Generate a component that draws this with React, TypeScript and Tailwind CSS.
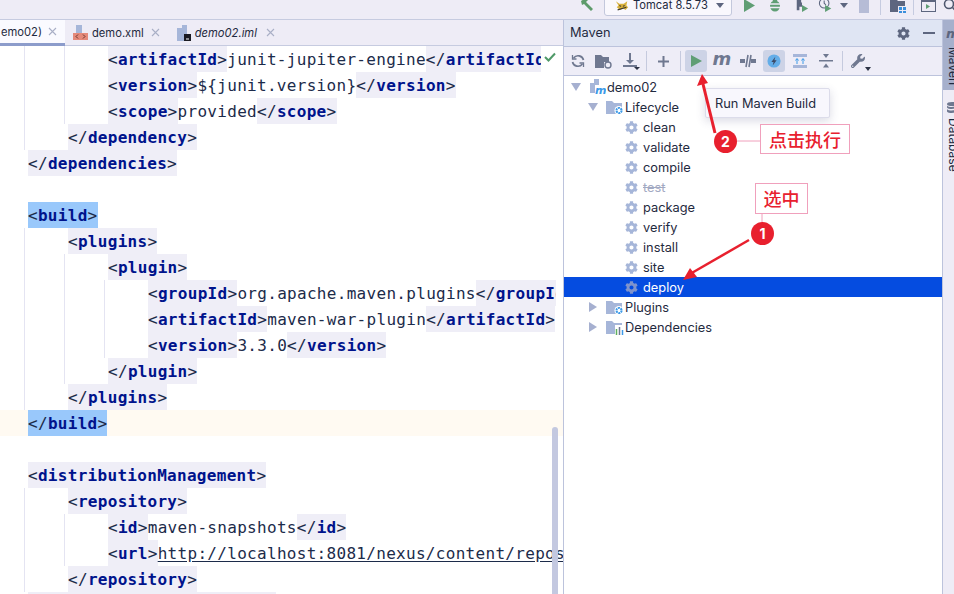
import { FaCog, FaWrench } from "react-icons/fa";
import type { ReactNode } from "react";

type Seg = { t: string; k?: "tag" | "text" | "url" };
type Line = { indent: number; segs: Seg[]; sel?: boolean; caret?: boolean; clip?: boolean };

const tag = (name: string, close = false) => ({ t: close ? `</${name}>` : `<${name}>`, k: "tag" as const });
const txt = (t: string) => ({ t, k: "text" as const });

const lines: Line[] = [
  { indent: 2, segs: [tag("artifactId"), txt("junit-jupiter-engine"), { t: "</artifactId>", k: "tag" }] },
  { indent: 2, segs: [tag("version"), txt("${junit.version}"), tag("version", true)] },
  { indent: 2, segs: [tag("scope"), txt("provided"), tag("scope", true)] },
  { indent: 1, segs: [tag("dependency", true)] },
  { indent: 0, segs: [tag("dependencies", true)] },
  { indent: 0, segs: [] },
  { indent: 0, segs: [tag("build")], sel: true },
  { indent: 1, segs: [tag("plugins")] },
  { indent: 2, segs: [tag("plugin")] },
  { indent: 3, segs: [tag("groupId"), txt("org.apache.maven.plugins"), tag("groupId", true)], clip: true },
  { indent: 3, segs: [tag("artifactId"), txt("maven-war-plugin"), tag("artifactId", true)] },
  { indent: 3, segs: [tag("version"), txt("3.3.0"), tag("version", true)] },
  { indent: 2, segs: [tag("plugin", true)] },
  { indent: 1, segs: [tag("plugins", true)] },
  { indent: 0, segs: [tag("build", true)], sel: true, caret: true },
  { indent: 0, segs: [] },
  { indent: 0, segs: [tag("distributionManagement")] },
  { indent: 1, segs: [tag("repository")] },
  { indent: 2, segs: [tag("id"), txt("maven-snapshots"), tag("id", true)] },
  { indent: 2, segs: [tag("url"), { t: "http://localhost:8081/nexus/content/repository/maven", k: "url" }] },
  { indent: 1, segs: [tag("repository", true)] },
  { indent: 0, segs: [tag("distributionManagement", true)] },
];

const goals = ["clean", "validate", "compile", "test", "package", "verify", "install", "site", "deploy"];

function TagText({ text }: { text: string }) {
  const m = text.match(/^(<\/?)(.*)(>)$/);
  if (!m) return <>{text}</>;
  return (
    <>
      <span className="font-normal text-[#1c2b4a]">{m[1]}</span>
      <span className="font-bold text-[#00138c]">{m[2]}</span>
      <span className="font-normal text-[#1c2b4a]">{m[3]}</span>
    </>
  );
}

function CodeLine({ line }: { line: Line }) {
  return (
    <div
      className={`flex h-[26px] shrink-0 leading-[28px] whitespace-pre ${line.caret ? "bg-[#fffaf2]" : ""} ${
        line.clip ? "w-[556px] overflow-hidden" : ""
      }`}
    >
      <div className="flex pl-[24px]">
        {Array.from({ length: line.indent }).map((_, i) => (
          <span key={i} className="w-[40px] border-l border-[#e4e4f2]" />
        ))}
      </div>
      <div className="flex pl-[4px]">
        {line.segs.map((s, i) => {
          if (s.k === "tag")
            return (
              <span key={i} className={line.sel ? "bg-[#99c8fb]" : "bg-[#efeef7]"}>
                <TagText text={s.t} />
              </span>
            );
          if (s.k === "url")
            return (
              <span key={i} className="text-[#1c2b4a] underline underline-offset-2">
                {s.t}
              </span>
            );
          return (
            <span key={i} className="text-[#1c2b4a]">
              {s.t}
            </span>
          );
        })}
      </div>
    </div>
  );
}

function Sep({ className = "" }: { className?: string }) {
  return <span className={`h-[20px] w-px bg-[#c5cade] ${className}`} />;
}

function ToolIcon({ children, on = false, w = 22 }: { children: ReactNode; on?: boolean; w?: number }) {
  return (
    <span
      className={`flex h-[22px] items-center justify-center rounded-[3px] ${on ? "bg-[#cdd3e6]" : ""}`}
      style={{ width: w }}
    >
      {children}
    </span>
  );
}

function FolderIcon({ badge }: { badge?: ReactNode }) {
  return (
    <svg width="18" height="16" viewBox="0 0 18 16">
      <path d="M0 2h6l2 2h8v11H0z" fill="#a6b6d9" />
      {badge}
    </svg>
  );
}

function GearBadge() {
  return (
    <g>
      <circle cx="13" cy="11.500" r="4.500" fill="#fff" />
      <circle cx="13" cy="11.500" r="2.600" fill="none" stroke="#3c9ae8" strokeWidth="2" strokeDasharray="2 0.700" />
    </g>
  );
}

function TabClose({ className = "" }: { className?: string }) {
  return (
    <svg width="9" height="9" viewBox="0 0 9 9" className={className}>
      <path d="M1 1l7 7M8 1l-7 7" stroke="#a9afc6" strokeWidth="1.100" />
    </svg>
  );
}

function TopBar() {
  return (
    <div className="flex h-[20px] shrink-0 items-start overflow-hidden border-b border-[#c6cbe0] bg-[#eeecf6] pl-[579px]">
      <div className="-mt-[6px] flex h-[22px] items-center whitespace-nowrap">
        <svg width="16" height="16" viewBox="0 0 16 16">
          <path d="M2 4l5-3 2 2-2 2 7 7-2 2-7-7-2 1z" fill="#5d9b6a" />
        </svg>
        <div className="ml-[9px] flex h-[21px] w-[128px] shrink-0 items-center rounded-[3px] border border-[#c3c8dc] bg-[#f9f8fd] pl-[10px] text-[11.200px] text-[#1f2a40]">
          <svg width="14" height="13" viewBox="0 0 16 14" className="mr-[4px] shrink-0">
            <path d="M1 2l4 3h5l4-3-1 5 2 2-3 3-3-2-3 2-4-3 2-2z" fill="#d8b13c" />
            <path d="M5 7l2 1M11 7l-2 1M3 12l10-3" stroke="#3c3a32" strokeWidth="1.200" />
          </svg>
          <span className="pt-px">Tomcat 8.5.73</span>
          <svg width="8" height="5" viewBox="0 0 10 6" className="ml-[8px] shrink-0">
            <path d="M0 0h10L5 6z" fill="#5d667f" />
          </svg>
        </div>
        <svg width="11" height="13" viewBox="0 0 11 13" className="ml-[12px] shrink-0">
          <path d="M0 0l11 6.500L0 13z" fill="#5f9e74" />
        </svg>
        <svg width="12" height="14" viewBox="0 0 12 14" className="ml-[14px] shrink-0">
          <ellipse cx="6" cy="8" rx="5" ry="5.500" fill="#5f9e74" />
          <path d="M1 6h10M1 9.500h10" stroke="#eeecf6" strokeWidth="1.300" />
          <circle cx="6" cy="2.500" r="2.200" fill="#5f9e74" />
        </svg>
        <svg width="14" height="16" viewBox="0 0 16 16" className="ml-[14px] shrink-0">
          <path d="M2 1h5v4h1v5H5v4H2z" fill="#5d667f" />
          <path d="M8 8l7 4-7 4z" fill="#5f9e74" />
        </svg>
        <svg width="15" height="16" viewBox="0 0 17 16" className="ml-[9px] shrink-0">
          <circle cx="7" cy="6" r="5.400" fill="none" stroke="#5d667f" strokeWidth="1.200" />
          <path d="M7 3v3l2 2" stroke="#5d667f" strokeWidth="1.200" fill="none" />
          <path d="M8 8l7 4-7 4z" fill="#5f9e74" />
        </svg>
        <svg width="8" height="5" viewBox="0 0 8 5" className="ml-[7px] shrink-0">
          <path d="M0 0h8L4 5z" fill="#5d667f" />
        </svg>
        <span className="ml-[11px] h-[15px] w-[10px] shrink-0 bg-[#b6bcd6]" />
        <span className="ml-[11px] h-[20px] w-px shrink-0 bg-[#c6cbe0]" />
        <svg width="16" height="16" viewBox="0 0 16 16" className="ml-[9px] shrink-0">
          <path d="M0 2h6l2 2h7v5H8v6H0z" fill="#5d667f" />
          <rect x="9" y="10" width="3" height="3" fill="#3a8fdc" />
          <rect x="13" y="10" width="3" height="3" fill="#3a8fdc" />
          <rect x="9" y="14" width="3" height="2" fill="#3a8fdc" />
          <rect x="13" y="14" width="3" height="2" fill="#3a8fdc" />
        </svg>
        <span className="ml-[7px] h-[20px] w-px shrink-0 bg-[#c6cbe0]" />
        <svg width="15" height="14" viewBox="0 0 15 14" className="ml-[7px] shrink-0">
          <rect x="0.500" y="1.500" width="14" height="12" fill="none" stroke="#5d667f" />
          <path d="M0 3h15" stroke="#5d667f" strokeWidth="2" />
          <path d="M5 6l4 2.500L5 11z" fill="#5f9e74" />
        </svg>
        <svg width="14" height="14" viewBox="0 0 14 14" className="ml-[7px] shrink-0">
          <circle cx="6" cy="6" r="4.500" fill="none" stroke="#4f586f" strokeWidth="1.600" />
          <path d="M9.500 9.500L13 13" stroke="#4f586f" strokeWidth="1.600" />
        </svg>
      </div>
    </div>
  );
}

function Tabs() {
  return (
    <div className="flex h-[26px] shrink-0 items-stretch border-b border-[#c6cbe0] bg-[#eeecf6] text-[11.200px] text-[#1f2a40]">
      <div className="-mb-px flex w-[65px] items-center justify-end border-b-[3px] border-[#8c9ccb] bg-[#fafaff] pr-[8px]">
        <span className="mr-[6px] pt-px">emo02)</span>
        <TabClose />
      </div>
      <div className="flex items-center pl-[8px]">
        <svg width="15" height="16" viewBox="0 0 15 16">
          <path d="M3 0h6v8H3z" fill="#a6b6d9" />
          <rect y="8" width="15" height="7" fill="#e58a7b" />
          <path d="M5 9.500l-2 2 2 2M10 9.500l2 2-2 2" stroke="#5b2a24" fill="none" strokeWidth="0.900" />
        </svg>
        <span className="ml-[4px] pt-px">demo.xml</span>
        <TabClose className="ml-[7px]" />
      </div>
      <div className="flex items-center pl-[17px]">
        <svg width="15" height="16" viewBox="0 0 15 16">
          <path d="M0 3h5V0h5v16H0z" fill="#a6b6d9" />
          <rect x="7" y="9" width="7" height="7" fill="#1a1a22" />
          <path d="M9 14h3" stroke="#fff" />
        </svg>
        <span className="ml-[3px] pt-px italic">demo02.iml</span>
        <TabClose className="ml-[9px]" />
      </div>
    </div>
  );
}

function Editor() {
  return (
    <div className="relative flex w-[563px] shrink-0 flex-col overflow-hidden bg-white">
      <Tabs />
      <div className="flex flex-col font-['DejaVu_Sans_Mono',monospace] text-[16px] tracking-[0.3px]">
        {lines.map((line, i) => (
          <CodeLine key={i} line={line} />
        ))}
      </div>
      <div className="absolute right-0 top-[26px] h-[26px] w-[22px] bg-white pt-[6px] pl-[3px]">
        <svg width="12" height="10" viewBox="0 0 12 10">
          <path d="M1 5l3.500 3.500L11 1.500" stroke="#4f9a68" strokeWidth="2" fill="none" />
        </svg>
      </div>
      <div className="absolute right-[5px] top-[407px] bottom-0 w-[6px] rounded-t-[3px] bg-[#c3c8e0]" />
    </div>
  );
}

function TreeRow({ pad, arrow, icon, label, cls = "" }: { pad: number; arrow?: "down" | "right"; icon: ReactNode; label: string; cls?: string }) {
  return (
    <div className={`flex h-[20px] items-center ${cls}`} style={{ paddingLeft: pad }}>
      {arrow && (
        <svg width="10" height="10" viewBox="0 0 10 10" className="mr-[8px]">
          <path d={arrow === "down" ? "M0 1h10L5 9z" : "M1 0l8 5-8 5z"} fill="#a6b0d0" />
        </svg>
      )}
      {icon}
      <span className={`pt-[2px] ${arrow ? "ml-px" : ""}`}>{label}</span>
    </div>
  );
}

function MavenPanel() {
  return (
    <div className="flex w-[379px] shrink-0 flex-col border-l border-[#bcc3dc] bg-white text-[12.800px] text-[#1f2a40]">
      <div className="flex h-[27px] shrink-0 items-center border-b border-[#bcc3dc] bg-[#dfe5f3] pl-[6px] pr-[6px]">
        <span>Maven</span>
        <FaCog className="ml-auto text-[13px] text-[#5d667f]" />
        <span className="ml-[13px] mr-[1px] h-[2px] w-[12px] bg-[#5d667f]" />
      </div>
      <div className="flex h-[29px] shrink-0 items-center border-b border-[#bcc3dc] bg-[#eeedf7] pl-[3px] text-[#5d667f]">
        <ToolIcon>
          <svg width="14" height="14" viewBox="0 0 14 14" fill="none" stroke="#6f7890" strokeWidth="1.700">
            <path d="M12.500 6A5.600 5.600 0 0 0 2.600 4M1.500 8a5.600 5.600 0 0 0 9.900 2" />
            <path d="M1.500 1v4h4M12.500 13V9h-4" strokeWidth="1.300" />
          </svg>
        </ToolIcon>
        <ToolIcon w={30}>
          <svg width="18" height="15" viewBox="0 0 18 15">
            <path d="M0 1h6l2 2h6v5H9v6H0z" fill="#6f7890" />
            <circle cx="13" cy="11" r="3" fill="none" stroke="#6f7890" strokeWidth="1.400" />
          </svg>
        </ToolIcon>
        <ToolIcon w={24}>
          <svg width="18" height="17" viewBox="0 0 18 17">
            <path d="M7 0h2v7h3l-4 4-4-4h3zM1 12h14v2H1z" fill="#6f7890" />
            <path d="M12 14h6l-3 3z" fill="#2d3345" />
          </svg>
        </ToolIcon>
        <Sep className="ml-[3px]" />
        <ToolIcon w={33}>
          <svg width="11" height="11" viewBox="0 0 11 11">
            <path d="M4.500 0h2v4.500H11v2H6.500V11h-2V6.500H0v-2h4.500z" fill="#6f7890" />
          </svg>
        </ToolIcon>
        <Sep />
        <span className="ml-[4px]">
          <ToolIcon on>
            <svg width="11" height="12" viewBox="0 0 11 12">
              <path d="M0 0l11 6-11 6z" fill="#5f9e74" />
            </svg>
          </ToolIcon>
        </span>
        <ToolIcon w={30}>
          <span className="-mt-[4px] font-['DejaVu_Sans'] text-[18px] leading-none font-bold italic text-[#6f7890]">m</span>
        </ToolIcon>
        <ToolIcon>
          <svg width="16" height="14" viewBox="0 0 16 14">
            <path d="M0 5h5v4H0zM11 5h5v4h-5z" fill="#6f7890" />
            <path d="M6 13L8 1M9 13l2-12" stroke="#6f7890" strokeWidth="1.600" />
          </svg>
        </ToolIcon>
        <span className="ml-[4px]">
          <ToolIcon on>
            <svg width="14" height="14" viewBox="0 0 16 16">
              <circle cx="8" cy="8" r="7.500" fill="#63ade8" />
              <path d="M9.500 3L5 9h2.500L6.500 13 11 7H8.500z" fill="#3d4a66" />
            </svg>
          </ToolIcon>
        </span>
        <ToolIcon w={30}>
          <svg width="14" height="14" viewBox="0 0 14 14">
            <path d="M0 0h14v3H0zM0 11h14v3H0z" fill="#a6b6d9" />
            <path d="M4 10V5M10 10V5M2.500 6.500L4 4.500l1.500 2M8.500 6.500l1.500-2 1.500 2" stroke="#3c9ae8" fill="none" />
          </svg>
        </ToolIcon>
        <ToolIcon>
          <svg width="14" height="14" viewBox="0 0 14 14">
            <path d="M0 6h14v1.500H0z" fill="#6f7890" />
            <path d="M4 0h6L7 4zM4 13.500h6L7 9.500z" fill="#6f7890" />
          </svg>
        </ToolIcon>
        <Sep className="ml-[5px]" />
        <ToolIcon w={30}>
          <span className="relative">
            <FaWrench className="text-[14px] text-[#6f7890]" />
            <svg width="6" height="4" viewBox="0 0 6 4" className="absolute -bottom-[3px] -right-[6px]">
              <path d="M0 0h6L3 4z" fill="#2d3345" />
            </svg>
          </span>
        </ToolIcon>
      </div>
      <div className="flex flex-col pt-[1px]">
        <TreeRow
          pad={7}
          arrow="down"
          label="demo02"
          icon={
            <svg width="17" height="16" viewBox="0 0 17 16">
              <path d="M1 4h4V0h5v6H6v8H1z" fill="#a6b6d9" />
              <text x="6" y="15" fontSize="11" fontWeight="700" fontStyle="italic" fill="#3c9ae8" fontFamily="DejaVu Sans">m</text>
            </svg>
          }
        />
        <TreeRow pad={24} arrow="down" label="Lifecycle" icon={<FolderIcon badge={<GearBadge />} />} />
        {goals.map((g) => (
          <TreeRow
            key={g}
            pad={61}
            cls={g === "deploy" ? "bg-[#054ce0] text-white" : g === "test" ? "text-[#a2a9c2] line-through" : ""}
            label={g}
            icon={<FaCog className={`mr-[5px] text-[13px] ${g === "deploy" ? "text-[#7f93cc]" : "text-[#a6b6d9]"}`} />}
          />
        ))}
        <TreeRow pad={24} arrow="right" label="Plugins" icon={<FolderIcon badge={<GearBadge />} />} />
        <TreeRow
          pad={24}
          arrow="right"
          label="Dependencies"
          icon={
            <FolderIcon
              badge={
                <g>
                  <rect x="9" y="6" width="9" height="10" fill="#fff" />
                  <path d="M10.500 16v-6" stroke="#5fae5f" strokeWidth="1.500" />
                  <path d="M13.500 16V8" stroke="#6f7890" strokeWidth="1.500" />
                  <path d="M16.500 16v-5" stroke="#3c9ae8" strokeWidth="1.500" />
                </g>
              }
            />
          }
        />
      </div>
    </div>
  );
}

function RightStrip() {
  const vertical = "[writing-mode:vertical-rl] text-[12px] leading-none text-[#1f2a40]";
  return (
    <div className="flex flex-1 flex-col items-start overflow-hidden border-l border-[#bcc3dc] bg-[#eeecf6]">
      <div className="flex h-[70px] w-full flex-col items-start bg-[#a6b0cc] pl-[3px] pt-[7px]">
        <span className="font-['DejaVu_Sans'] text-[13px] leading-none font-bold italic text-[#5d667f]">m</span>
        <span className={`${vertical} ml-[1px] mt-[7px]`}>Maven</span>
      </div>
      <div className="mt-[12px] flex flex-col items-start pl-[4px]">
        <svg width="10" height="12" viewBox="0 0 10 12">
          <ellipse cx="5" cy="2" rx="5" ry="2" fill="#6f7890" />
          <path d="M0 3.500c1 2 9 2 10 0v2c-1 2-9 2-10 0zM0 7c1 2 9 2 10 0v2.500c-1 2-9 2-10 0z" fill="#6f7890" />
        </svg>
        <span className={`${vertical} mt-[4px]`}>Database</span>
      </div>
    </div>
  );
}

function Annotations() {
  return (
    <>
      <div className="absolute left-[705px] top-[88px] flex h-[30px] w-[125px] items-center rounded-[2px] border border-[#dcdcea] bg-[#f8f7fd] pl-[9px] pt-[2px] text-[12.800px] text-[#1f2a40] shadow-[0_3px_10px_rgba(70,70,120,0.2)]">
        Run Maven Build
      </div>
      <svg width="954" height="594" viewBox="0 0 954 594" className="absolute left-0 top-0">
        <path d="M737 141H760M762 213V224" stroke="#f0a0bc" strokeWidth="1" />
        <path d="M715 133L703 84" stroke="#e8202e" strokeWidth="3" />
        <path d="M702 74L697 86L708 83Z" fill="#e8202e" />
        <path d="M749 240L690 274" stroke="#e8202e" strokeWidth="2.500" />
        <path d="M683 280L690 268L697 277Z" fill="#e8202e" />
      </svg>
      <div className="absolute left-[760px] top-[124px] flex h-[30px] w-[90px] items-center justify-center border border-[#f0a0bc] bg-white font-['Noto_Sans_CJK_SC',sans-serif] text-[18px] font-medium text-[#e8202e]">
        点击执行
      </div>
      <div className="absolute left-[755px] top-[183px] flex h-[31px] w-[53px] items-center justify-center border border-[#f0a0bc] bg-white font-['Noto_Sans_CJK_SC',sans-serif] text-[18px] font-medium text-[#e8202e]">
        选中
      </div>
      <div className="absolute left-[714px] top-[130px] flex h-[23px] w-[23px] items-center justify-center rounded-full bg-[#e8202e] text-[14px] font-bold text-white">
        2
      </div>
      <div className="absolute left-[751px] top-[222px] flex h-[23px] w-[23px] items-center justify-center rounded-full bg-[#e8202e] text-[14px] font-bold text-white">
        1
      </div>
    </>
  );
}

export default function App() {
  return (
    <div className="relative flex h-[594px] w-[954px] flex-col overflow-hidden bg-white font-['Inter','Liberation_Sans',sans-serif]">
      <TopBar />
      <div className="flex min-h-0 flex-1">
        <Editor />
        <MavenPanel />
        <RightStrip />
      </div>
      <Annotations />
    </div>
  );
}
